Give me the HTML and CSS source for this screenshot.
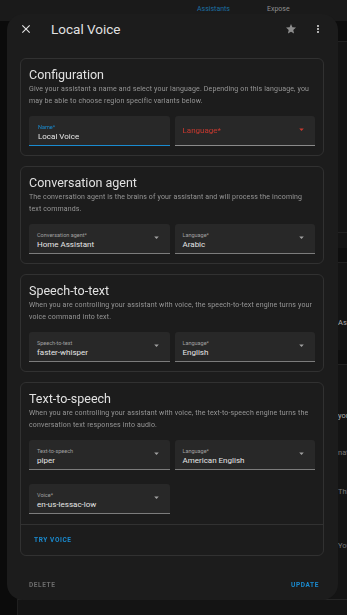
FILE: index.html
```html
<html lang="en">
<head>
    <meta charset="UTF-8">
    <meta name="viewport" content="width=device-width, initial-scale=1.0">
    <title>Local Voice</title>
    <link rel="stylesheet" href="styles.css">
</head>
<body>
    <!-- Page behind the dialog -->
    <div class="page">
        <header class="topbar">
            <span class="tab active">Assistants</span>
            <span class="tab">Expose</span>
        </header>
        <div class="page-body">
            <aside class="rail"></aside>
            <main class="content">
                <div class="strip dark"></div>
                <div class="strip gap-a"></div>
                <div class="strip band"></div>
                <div class="strip gap-b"></div>
                <p class="frag light frag-a">Assist</p>
                <div class="strip band band-2"></div>
                <p class="frag light frag-b">your</p>
                <p class="frag frag-c">natural</p>
                <p class="frag frag-d">This</p>
                <p class="frag frag-e">You</p>
                <div class="strip bottom-line"></div>
            </main>
        </div>
    </div>

    <!-- Dialog -->
    <div class="scrim">
        <div class="dialog">
            <div class="dialog-header">
                <svg class="icon close" viewBox="0 0 24 24"><path d="M19,6.41L17.59,5L12,10.59L6.41,5L5,6.41L10.59,12L5,17.59L6.41,19L12,13.41L17.59,19L19,17.59L13.41,12L19,6.41Z"/></svg>
                <h1 class="dialog-title">Local Voice</h1>
                <svg class="icon star" viewBox="0 0 24 24"><path d="M12,17.27L18.18,21L16.54,14.03L22,9.24L14.81,8.62L12,2L9.19,8.62L2,9.24L7.45,14.03L5.82,21L12,17.27Z"/></svg>
                <svg class="icon kebab" viewBox="0 0 24 24"><path d="M12,16A2,2 0 0,1 14,18A2,2 0 0,1 12,20A2,2 0 0,1 10,18A2,2 0 0,1 12,16M12,10A2,2 0 0,1 14,12A2,2 0 0,1 12,14A2,2 0 0,1 10,12A2,2 0 0,1 12,10M12,4A2,2 0 0,1 14,6A2,2 0 0,1 12,8A2,2 0 0,1 10,6A2,2 0 0,1 12,4Z"/></svg>
            </div>

            <div class="dialog-content">
                <section class="card">
                    <h2>Configuration</h2>
                    <p class="desc">Give your assistant a name and select your language. Depending on this language, you<br>may be able to choose region specific variants below.</p>
                    <div class="row">
                        <div class="field focused">
                            <span class="label">Name*</span>
                            <span class="value">Local Voice</span>
                        </div>
                        <div class="field select error">
                            <span class="placeholder">Language*</span>
                            <svg class="arrow" viewBox="0 0 24 24"><path d="M7,10L12,15L17,10H7Z"/></svg>
                        </div>
                    </div>
                </section>

                <section class="card">
                    <h2>Conversation agent</h2>
                    <p class="desc">The conversation agent is the brains of your assistant and will process the incoming<br>text commands.</p>
                    <div class="row">
                        <div class="field select">
                            <span class="label">Conversation agent*</span>
                            <span class="value">Home Assistant</span>
                            <svg class="arrow" viewBox="0 0 24 24"><path d="M7,10L12,15L17,10H7Z"/></svg>
                        </div>
                        <div class="field select">
                            <span class="label">Language*</span>
                            <span class="value">Arabic</span>
                            <svg class="arrow" viewBox="0 0 24 24"><path d="M7,10L12,15L17,10H7Z"/></svg>
                        </div>
                    </div>
                </section>

                <section class="card">
                    <h2>Speech-to-text</h2>
                    <p class="desc">When you are controlling your assistant with voice, the speech-to-text engine turns your<br>voice command into text.</p>
                    <div class="row">
                        <div class="field select">
                            <span class="label">Speech-to-text</span>
                            <span class="value">faster-whisper</span>
                            <svg class="arrow" viewBox="0 0 24 24"><path d="M7,10L12,15L17,10H7Z"/></svg>
                        </div>
                        <div class="field select">
                            <span class="label">Language*</span>
                            <span class="value">English</span>
                            <svg class="arrow" viewBox="0 0 24 24"><path d="M7,10L12,15L17,10H7Z"/></svg>
                        </div>
                    </div>
                </section>

                <section class="card">
                    <h2>Text-to-speech</h2>
                    <p class="desc">When you are controlling your assistant with voice, the text-to-speech engine turns the<br>conversation text responses into audio.</p>
                    <div class="row">
                        <div class="field select">
                            <span class="label">Text-to-speech</span>
                            <span class="value">piper</span>
                            <svg class="arrow" viewBox="0 0 24 24"><path d="M7,10L12,15L17,10H7Z"/></svg>
                        </div>
                        <div class="field select">
                            <span class="label">Language*</span>
                            <span class="value">American English</span>
                            <svg class="arrow" viewBox="0 0 24 24"><path d="M7,10L12,15L17,10H7Z"/></svg>
                        </div>
                    </div>
                    <div class="row second">
                        <div class="field select">
                            <span class="label">Voice*</span>
                            <span class="value">en-us-lessac-low</span>
                            <svg class="arrow" viewBox="0 0 24 24"><path d="M7,10L12,15L17,10H7Z"/></svg>
                        </div>
                    </div>
                    <div class="card-actions">
                        <button class="text-btn primary">Try voice</button>
                    </div>
                </section>
            </div>

            <div class="dialog-footer">
                <button class="text-btn muted">Delete</button>
                <button class="text-btn primary">Update</button>
            </div>
        </div>
    </div>
</body>
</html>
```

FILE: styles.css
```css
/* Global */
body {
    margin: 0;
    padding: 0;
    font-family: Roboto, "Noto Sans", Arial, sans-serif;
    background: #0c0c0c;
    color: #e1e1e1;
    width: 347px;
    height: 615px;
    overflow: hidden;
}

/* Page behind the dialog */
.page {
    height: 615px;
    display: flex;
    flex-direction: column;
}

.topbar {
    height: 21px;
    background: #1a1a1a;
    display: flex;
    align-items: center;
    padding-left: 197px;
    gap: 37px;
    box-sizing: border-box;
}

.tab {
    font-size: 7px;
    color: #8f8f8f;
    padding-bottom: 3px;
}

.tab.active {
    color: #1c6fa3;
}

.page-body {
    flex: 1;
    display: flex;
}

.rail {
    width: 17px;
    flex-shrink: 0;
    background: #0b0b0b;
    border-right: 1px solid #1f1f1f;
}

.content {
    flex: 1;
    min-width: 0;
    overflow: hidden;
    background: #141414;
    padding-left: 320px;
}

.strip {
    margin-left: -320px;
}

.strip.dark {
    height: 20px;
    background: #0d0d0d;
    border-bottom: 1px solid #222;
}

.strip.gap-a {
    height: 190px;
    border-bottom: 1px solid #222;
}

.strip.band {
    margin-top: 15px;
    height: 14px;
    background: #0e0e0e;
    border-bottom: 1px solid #222;
}

.strip.gap-b {
    height: 7px;
}

.strip.band-2 {
    margin-top: 22px;
}

.strip.bottom-line {
    margin-top: 48px;
    border-bottom: 1px solid #262626;
}

.frag {
    margin: 0;
    font-size: 7.5px;
    line-height: 10px;
    color: #777;
    white-space: nowrap;
}

.frag.light {
    color: #b0b0b0;
}

.frag-a { margin-top: 48px; }
.frag-b { margin-top: 46px; }
.frag-c { margin-top: 27px; }
.frag-d { margin-top: 29px; }
.frag-e { margin-top: 44px; }

/* Dialog */
.scrim {
    position: fixed;
    inset: 0;
    padding: 14px 9px 15px 7px;
    display: flex;
}

.dialog {
    flex: 1;
    background: #1c1c1c;
    border-radius: 16px;
    display: flex;
    flex-direction: column;
    overflow: hidden;
}

.dialog-header {
    height: 30px;
    display: flex;
    align-items: center;
    padding: 0 14px 0 12px;
}

.icon {
    fill: #e1e1e1;
    flex-shrink: 0;
}

.icon.close {
    width: 14px;
    height: 14px;
}

.dialog-title {
    flex: 1;
    margin: 0 0 0 18px;
    font-size: 13.5px;
    font-weight: 400;
    color: #e1e1e1;
}

.icon.star {
    width: 12px;
    height: 12px;
    fill: #8c8c8c;
}

.icon.kebab {
    width: 12px;
    height: 12px;
    margin-left: 15px;
}

.dialog-content {
    padding: 14px 14px 0 13px;
    display: flex;
    flex-direction: column;
    gap: 10px;
}

/* Cards */
.card {
    border: 1px solid #313131;
    border-radius: 6px;
    padding: 8px 8px 9px 8px;
}

.card h2 {
    margin: 0;
    font-size: 12.5px;
    line-height: 16px;
    font-weight: 400;
    color: #e1e1e1;
}

.desc {
    margin: 0;
    font-size: 7px;
    line-height: 12px;
    letter-spacing: 0.15px;
    color: #969696;
    white-space: nowrap;
}

.row {
    display: grid;
    grid-template-columns: 1fr 1fr;
    gap: 5px;
    margin-top: 9px;
}

.row.second {
    margin-top: 14px;
}

.field {
    position: relative;
    height: 30px;
    box-sizing: border-box;
    background: #282828;
    border-radius: 3px 3px 0 0;
    border-bottom: 1px solid #7c7c7c;
    padding: 8px 8px 0;
    display: flex;
    flex-direction: column;
}

.field.focused {
    border-bottom-color: #1a8bd0;
    padding-left: 9px;
}

.label {
    font-size: 5.5px;
    line-height: 7px;
    color: #a0a0a0;
}

.field.focused .label {
    color: #1a8bd0;
}

.value {
    margin-top: 1px;
    font-size: 8px;
    line-height: 10px;
    color: #e6e6e6;
}

.placeholder {
    font-size: 8px;
    line-height: 14px;
    color: #c9392f;
}

.arrow {
    position: absolute;
    right: 8px;
    top: 8px;
    width: 11px;
    height: 11px;
    fill: #a0a0a0;
}

.field.error {
    border-bottom-color: #8a8a8a;
}

.field.error .arrow {
    fill: #c9392f;
}

.card-actions {
    margin: 10px -8px -9px;
    border-top: 1px solid #313131;
    height: 30px;
    display: flex;
    align-items: center;
    padding-left: 13px;
}

/* Buttons */
.text-btn {
    background: none;
    border: none;
    padding: 0;
    font-family: Roboto, "Noto Sans", Arial, sans-serif;
    font-size: 6.5px;
    font-weight: 700;
    letter-spacing: 0.6px;
    text-transform: uppercase;
    cursor: pointer;
}

.text-btn.primary {
    color: #1a8bd0;
}

.text-btn.muted {
    color: #6c6c6c;
}

.dialog-footer {
    margin-top: auto;
    height: 30px;
    display: flex;
    align-items: center;
    justify-content: space-between;
    padding: 0 19px 0 22px;
}
```
